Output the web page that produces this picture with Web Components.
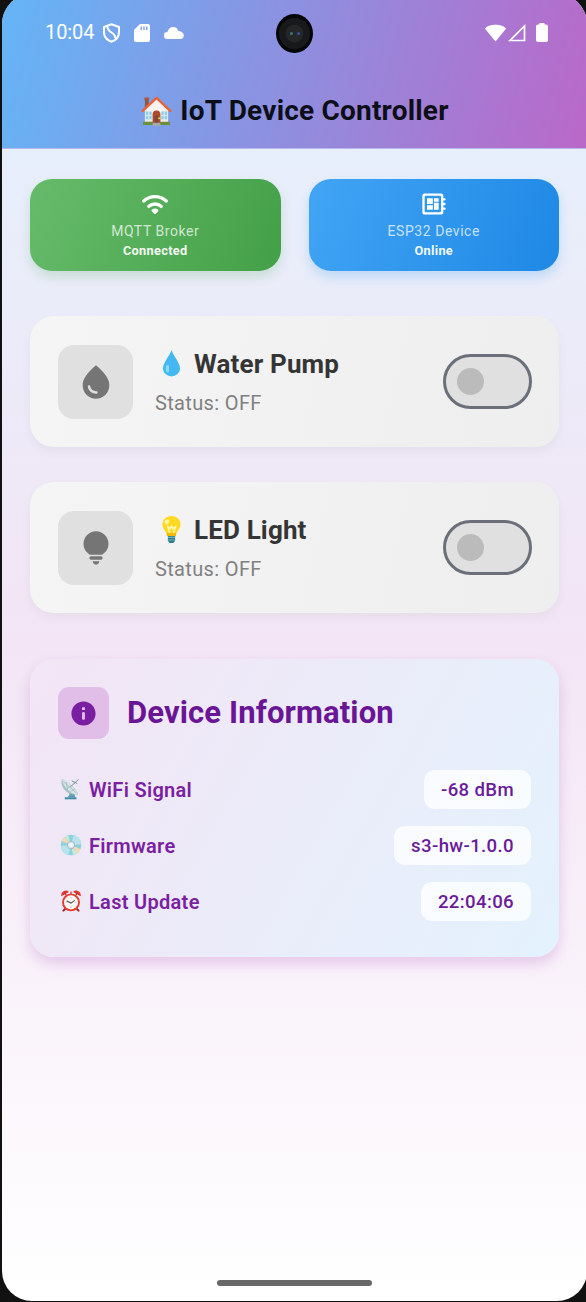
<!DOCTYPE html>
<html lang="en">
<head>
<meta charset="utf-8">
<title>IoT Device Controller</title>
<style>
html,body{margin:0;padding:0;background:#111;height:1302px;overflow:hidden;font-family:Roboto,"Liberation Sans",sans-serif}
</style>
</head>
<body>
<phone-screen></phone-screen>
<script>
const define = (name, css, html) => customElements.define(name, class extends HTMLElement {
  constructor() {
    super();
    const body = typeof html === 'function' ? html(this) : html;
    this.attachShadow({mode: 'open'}).innerHTML = `<style>*{box-sizing:border-box}:host{box-sizing:border-box;display:block}svg{display:block;flex:none}${css}</style>${body}`;
  }
});

const ICONS = {
  wifi: `<g fill="none" stroke="currentColor" stroke-width="2.9" stroke-linecap="round"><path d="M2.3 9.4C7.800 4.500 16.200 4.500 21.700 9.400"/><path d="M6.700 14c3-2.600 7.600-2.600 10.600 0" /></g><path fill="currentColor" d="M9.300 16.900c1.500-1.300 3.900-1.300 5.400 0 .4.400.4.900 0 1.300l-2 2.100c-.4.400-1 .4-1.400 0l-2-2.100c-.4-.4-.4-.9 0-1.300z"/>`,
  board: `<path fill="currentColor" fill-rule="evenodd" d="M22 8c0-.55-.45-1-1-1h-1V5c0-1.100-.9-2-2-2H4c-1.100 0-2 .9-2 2v14c0 1.100.9 2 2 2h14c1.100 0 2-.9 2-2v-2h1c.55 0 1-.45 1-1s-.45-1-1-1h-1v-2h1c.55 0 1-.45 1-1s-.45-1-1-1h-1V9h1c.55 0 1-.45 1-1zM17.200 19H4.800c-.45 0-.8-.35-.8-.8V5.800c0-.45.35-.8.8-.8h12.400c.45 0 .8.35.8.8v12.400c0 .45-.35.8-.8.8zM6 13h5v4H6zM12 7h4v3h-4zM6 7h5v5H6zM12 11h4v6h-4z"/>`,
  drop: `<path fill="currentColor" d="M12 2c-5.330 4.550-8 8.480-8 11.800 0 4.980 3.800 8.200 8 8.200s8-3.220 8-8.200c0-3.320-2.670-7.250-8-11.800zM7.830 14c.37 0 .67.26.74.62.41 2.220 2.280 2.980 3.640 2.870.43-.02.79.32.79.75 0 .4-.32.73-.72.75-2.130.13-4.620-1.090-5.190-4.120-.08-.45.28-.87.740-.87z"/>`,
  bulb: `<path fill="currentColor" d="M12 22c1.100 0 2-.9 2-2h-4c0 1.100.9 2 2 2zM9 17h6a1 1 0 0 1 0 2H9a1 1 0 0 1 0-2zM12 2C7.860 2 4.500 5.360 4.500 9.500c0 3.820 2.660 5.860 3.770 6.500h7.460c1.110-.64 3.770-2.680 3.770-6.500C19.500 5.360 16.140 2 12 2z"/>`,
  info: `<path fill="currentColor" d="M12 2C6.480 2 2 6.480 2 12s4.480 10 10 10 10-4.480 10-10S17.520 2 12 2zm0 15.200c-.7 0-1.200-.5-1.200-1.100v-4.200c0-.6.5-1.100 1.200-1.100s1.200.5 1.200 1.100v4.200c0 .6-.5 1.100-1.200 1.100zm1.200-8h-2.400V6.800h2.400v2.400z"/>`
};
const EMOJI = {
  house: `<path fill="#8d5a4a" d="M4 2h4v10H4z"/><path fill="#b5523b" d="M3.500 1.500h5v2h-5z"/><path fill="#eceae6" d="M4 14 16 3l12 11v14H4z"/><path fill="#f5f4f1" d="M6 14 16 5l10 9v3H6z"/><path fill="#6b9138" d="M2 26.500h28v3.500H2z"/><path fill="#8ed0e6" d="M5 16h6v8H5zM21 16h6v8h-6z"/><path fill="none" stroke="#f3f6f5" stroke-width=".8" d="M8 16v8M24 16v8M5 20h6M21 20h6"/><path fill="#b4492e" d="M12 28v-9a4 4 0 0 1 8 0v9z"/><path fill="#7e4a3c" d="M14 20h4v8h-4z"/><circle cx="18.700" cy="23" r="1" fill="#ffd23c"/><path fill="#a5a9aa" d="M12 27.500h8V31h-8z"/><path fill="none" stroke="#e66436" stroke-width="2.500" stroke-linejoin="round" stroke-linecap="round" d="M1.500 15.500 16 2l14.500 13.500"/>`,
  droplet: `<path fill="#44b8f0" d="M16 1C13 9 6.500 15 6.500 22a9.600 9.600 0 0 0 19 0C25.500 15 19 9 16 1z"/><path fill="#8edcfa" d="M10.500 18c1.600-2 3.200.3 2.700 3.500-.4 3 .4 4-1 4.500-2.500.3-3-5-1.700-8z"/>`,
  lamp: `<path fill="#2f7889" d="M12 23h8v5.500l-2 2.500h-4l-2-2.500z"/><path fill="#71b8c4" d="M12 24h8v1.500h-8zM12 27h8v1h-8z"/><path fill="#ffd91f" d="M16 1C10 1 6 5.200 6 10.500c0 5 4.500 7 5 12.500h10c.5-5.500 5-7.500 5-12.500C26 5.200 22 1 16 1z"/><path fill="#f6b400" d="M11 20h10v3H11z"/><path fill="none" stroke="#fff8bd" stroke-width="1.500" d="m14 20-2-7 3 2 1-3 1.500 3 3-2-2.500 7"/><ellipse cx="11" cy="7.500" rx="2.300" ry="3" fill="#fff59a" transform="rotate(35 11 7.500)"/>`,
  dish: `<path fill="#5d9fb0" d="m12 18 9 3 1 7H11l3-4z"/><path fill="#3f8ca3" d="M7 28h17v3H7z"/><path fill="#a9bfc6" d="M2.500 2C0 12 8 25 26 24.500c1-2-3-8-9-13.500S4.500 1 2.500 2z"/><path fill="#d6e3e6" d="M3.500 2.500c5 0 10 5 14 9s8.500 9.500 8 12.500c-3 1-11-3-15.500-8S3 5 3.500 2.500z"/><g fill="none"><path stroke="#93a9b1" stroke-width=".8" d="m5 5 19 17M9 6l2 11M16 11l-7 5M21 16l-7 4"/><path stroke="#6e8a94" stroke-width="1.300" d="M15 13 27 2M17 4l8 4"/></g><circle cx="21" cy="7" r="1.500" fill="#8eaab3"/><path fill="#e3ebee" d="m28 13 3 7-6-2z"/>`,
  disc: `<circle cx="16" cy="16" r="15" fill="#8dd1dc"/><path fill="#f4d9b5" d="M16 16 2 10a15 15 0 0 1 5-6zM16 16l14 6a15 15 0 0 1-5 6z"/><path fill="#c9eadb" d="M16 16 7 4l5-2zM16 16l9 12-6 3z"/><path fill="#b8e3ed" d="M16 16 20 1a15 15 0 0 1 11 14zM16 16 12 31A15 15 0 0 1 1 17z"/><circle cx="16" cy="16" r="6" fill="#a6bdc7"/><circle cx="16" cy="16" r="4.500" fill="#d9e8ef"/><circle cx="16" cy="16" r="3" fill="#f7f3fb"/>`,
  clock: `<path stroke="#9d2924" stroke-width="3" stroke-linecap="round" d="m8 27-3 3M24 27l3 3"/><path fill="#e0352b" d="M2 9a6.500 6.500 0 0 1 11-6zM30 9A6.500 6.500 0 0 0 19 3z"/><path fill="none" stroke="#a32b25" stroke-width="1.500" d="m7 5 4 5M25 5l-4 5M16 2v5"/><circle cx="16" cy="18" r="13" fill="#e33e31"/><circle cx="16" cy="18" r="10.200" fill="#fffaf6"/><path stroke="#52494a" stroke-width="1.500" fill="none" stroke-linecap="round" d="m10 16 6 3 5-3.500"/><path stroke="#b5aaa7" d="M16 10v2M16 24v2M8 18h2M22 18h2"/>`
};
const attr = (el, n) => el.getAttribute(n) || '';

define('ui-icon', ':host{flex:none}svg{width:100%;height:100%}', el => `<svg viewBox="0 0 24 24">${ICONS[attr(el,'name')]}</svg>`);
define('ui-emoji', ':host{flex:none}svg{width:100%;height:100%}', el => `<svg viewBox="0 0 32 32">${EMOJI[attr(el,'name')]}</svg>`);

define('status-bar', `
:host{display:flex;align-items:center;height:37px;padding:0 39px 0 43px;color:#fff;font-size:20px;line-height:37px}
.time{width:57px;white-space:nowrap;letter-spacing:-.1px}
.sd{margin-left:13px}.cloud{margin-left:14px}.wifi{margin-left:auto}.signal{margin-left:2px}.battery{margin-left:10px}`,
`<span class="time">10:04</span>
<svg width="19" height="20" viewBox="0 0 19 20" fill="none" stroke="#fff" stroke-width="2"><path d="M9.500 1.300 2 4v5c0 4.700 3 8.200 7.500 9.700C14 17.200 17 13.700 17 9V4z" stroke-linejoin="round"/><path d="M5.500 3.500c0 3.500 1.500 4.500 4 6 2.300 1.400 4 3 3.500 5.500"/></svg>
<svg class="sd" width="16" height="18" viewBox="0 0 16 18"><path fill="#fff" d="M6 0h8q2 0 2 2v14q0 2-2 2H2q-2 0-2-2V6z"/><path stroke="#86a5e9" stroke-width="1.500" d="M7.200 2.500v3.500M10 2.500v3.500M12.800 2.500v3.500"/></svg>
<svg class="cloud" width="20" height="12" viewBox="0 0 20 12"><path fill="#fff" d="M3.500 12a3.500 3.500 0 0 1-.3-7C4.500 3.700 5 0 9 0c3 0 4.600 1.500 5.300 4 3 .1 5.500 1.900 5.500 4.400 0 2.200-1.500 3.600-3.600 3.600z"/></svg>
<svg class="wifi" width="21" height="18" viewBox="0 0 22 18"><path fill="#fff" d="M0 4.500C3-.8 18.500-1.500 22 4.500L11 18z"/></svg>
<svg class="signal" width="18" height="18" viewBox="0 0 18 18"><path fill="none" stroke="#fff" stroke-width="1.700" d="M16.500 2v14.500H2z"/></svg>
<svg class="battery" width="12" height="19" viewBox="0 0 12 19"><path fill="#fff" d="M3.500 0h5v1.500H10q2 0 2 2V17q0 2-2 2H2q-2 0-2-2V3.500q0-2 2-2h1.500z"/></svg>`);

define('camera-punch', `
:host{position:absolute;left:274px;top:14px;width:37px;height:39px;border-radius:50%;background:#050607;padding:4px 3px}
div{height:31px;border-radius:50%;background:radial-gradient(circle,#242628 0 38%,#17191a 42% 100%);display:flex;align-items:center;justify-content:center;gap:4px}
i{width:3px;height:3px;border-radius:50%;background:#347881}i+i{background:#38559a}`, '<div><i></i><i></i></div>');

define('app-header', `
:host{position:relative;height:149px;padding-top:14px;background:linear-gradient(104.300deg,#64b5f6,#ba68c8);border-bottom:1px solid #b7b8ea}
.bar{display:flex;align-items:center;justify-content:center;gap:8px;height:85px;padding-top:35px;margin-left:1px}
ui-emoji{width:31px;height:31px}
h1{margin:0;font-size:28px;line-height:34px;font-weight:700;letter-spacing:.2px;color:#0d0f18;white-space:nowrap}`,
`<status-bar></status-bar><camera-punch></camera-punch><div class="bar"><ui-emoji name="house"></ui-emoji><h1><slot></slot></h1></div>`);

define('status-card', `
:host{height:92px;border-radius:22px;display:flex;flex-direction:column;align-items:center;color:#fff;padding-top:11px;background:var(--fill);box-shadow:0 6px 11px var(--glow)}
ui-icon{width:28px;height:28px}
.label{margin-top:3px;font-size:14px;line-height:20px;color:#ffffffbb;letter-spacing:.55px}
.state{font-size:12.800px;line-height:20px;font-weight:700;letter-spacing:.3px;color:#fffffff5}`,
el => `<ui-icon name="${attr(el,'icon')}"></ui-icon><span class="label">${attr(el,'label')}</span><span class="state"><slot></slot></span>`);

define('toggle-switch', `
:host{width:89px;height:55px;border:3px solid #6b6f7a;border-radius:28px;background:#e0e0e0;padding:11px;flex:none}
i{display:block;width:27px;height:27px;border-radius:50%;background:#bbb}`, '<i></i>');

define('device-card', `
:host{height:131px;border-radius:24px;display:flex;align-items:center;padding:0 27px 0 28px;background:linear-gradient(103.900deg,#f5f5f5,#eee);box-shadow:0 5px 11px #0000000b}
.box{width:75px;height:74px;border-radius:16px;background:#e0e0e0;color:#757575;display:flex;align-items:center;justify-content:center;flex:none}
.box ui-icon{width:40px;height:40px}
.text{flex:1;margin-left:22px;padding-top:2px}
h2{margin:0;display:flex;align-items:center;gap:8px;padding-left:2px;font-size:26px;line-height:34px;font-weight:700;letter-spacing:.15px;color:#353535;white-space:nowrap}
ui-emoji{width:29px;height:29px}
p{margin:6px 0 0;font-size:20px;line-height:32px;letter-spacing:.35px;color:#808080}`,
el => `<div class="box"><ui-icon name="${attr(el,'icon')}"></ui-icon></div><div class="text"><h2><ui-emoji name="${attr(el,'emoji')}"></ui-emoji><span>${attr(el,'label')}</span></h2><p><slot></slot></p></div><toggle-switch></toggle-switch>`);

define('info-row', `
:host{display:flex;align-items:center;height:39px}
ui-emoji{width:22px;height:22px;margin:0 7px 1px 2px}
.label{font-size:20px;line-height:24px;font-weight:600;color:#7b1fa2;letter-spacing:.3px}
.value{margin-left:auto;height:39px;line-height:40px;border-radius:11px;padding:0 17px;background:#ffffffc4;color:#6a1b9a;font-size:18.600px;font-weight:500;letter-spacing:.36px}`,
el => `<ui-emoji name="${attr(el,'emoji')}"></ui-emoji><span class="label">${attr(el,'label')}</span><span class="value"><slot></slot></span>`);

define('info-card', `
:host{height:298px;border-radius:24px;padding:28px 28px 0;background:linear-gradient(119.400deg,#f3e5f5,#e3f2fd);box-shadow:0 7px 14px #9c27b033}
header{display:flex;align-items:center;gap:18px;height:52px}
.box{width:51px;height:52px;border-radius:11px;background:#e1bee7;color:#7b1fa2;display:flex;align-items:center;justify-content:center}
.box ui-icon{width:29px;height:29px}
h2{margin:0;font-size:31px;line-height:40px;font-weight:700;letter-spacing:.12px;color:#6a1596;white-space:nowrap}
.rows{display:flex;flex-direction:column;gap:17px;margin-top:31px}`,
el => `<header><div class="box"><ui-icon name="info"></ui-icon></div><h2>${attr(el,'label')}</h2></header><div class="rows"><slot></slot></div>`);

define('home-bar', ':host{width:155px;height:6px;border-radius:3px;background:#686868;margin:auto auto 15px}', '');

define('phone-screen', `
:host{width:586px;height:1302px;overflow:hidden;background:#111}
.mask{width:585px;height:1307px;margin:-6px 0 0 2px;padding-top:6px;border-radius:30px;overflow:hidden;background:linear-gradient(#e3f2fd,#f3e5f5 50%,#fff)}
.screen{height:1301px;display:flex;flex-direction:column}
main{padding:30px 28px 0}
.status{display:grid;grid-template-columns:1fr 1fr;gap:28px;margin-bottom:45px}
device-card{margin-bottom:35px}info-card{margin-top:46px}`,
`<div class="mask"><div class="screen"><app-header>IoT Device Controller</app-header>
<main>
<div class="status">
<status-card icon="wifi" label="MQTT Broker" style="--fill:linear-gradient(110.200deg,#66bb6a,#43a047);--glow:#4caf5038">Connected</status-card>
<status-card icon="board" label="ESP32 Device" style="--fill:linear-gradient(110.200deg,#42a5f5,#1e88e5);--glow:#2196f338">Online</status-card>
</div>
<device-card icon="drop" emoji="droplet" label="Water Pump">Status: OFF</device-card>
<device-card icon="bulb" emoji="lamp" label="LED Light">Status: OFF</device-card>
<info-card label="Device Information">
<info-row emoji="dish" label="WiFi Signal">-68 dBm</info-row>
<info-row emoji="disc" label="Firmware">s3-hw-1.0.0</info-row>
<info-row emoji="clock" label="Last Update">22:04:06</info-row>
</info-card>
</main>
<home-bar></home-bar></div></div>`);
</script>
</body>
</html>
